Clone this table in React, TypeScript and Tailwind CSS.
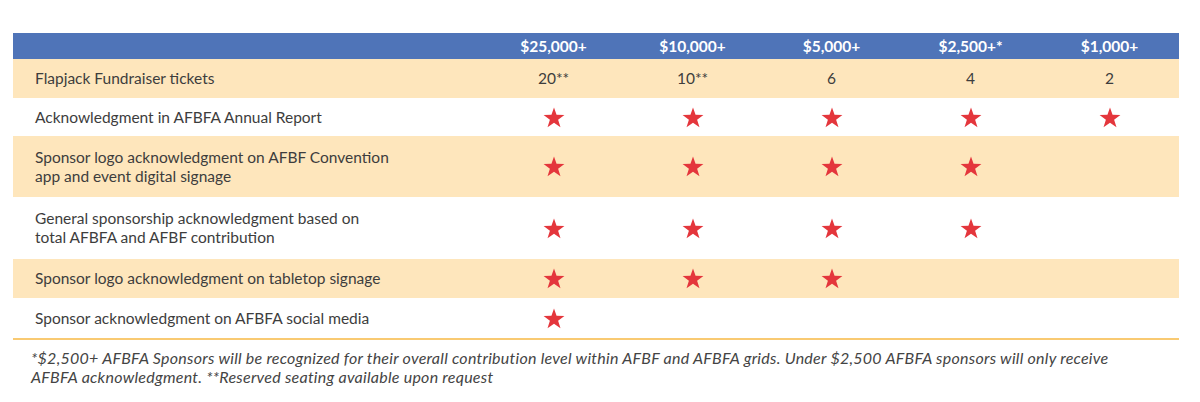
const tiers = ['$25,000+', '$10,000+', '$5,000+', '$2,500+*', '$1,000+'];

type Row = { label: string[]; cells: (string | boolean)[]; tan: boolean; h: string };

const rows: Row[] = [
  { label: ['Flapjack Fundraiser tickets'], cells: ['20**', '10**', '6', '4', '2'], tan: true, h: 'h-[39px]' },
  { label: ['Acknowledgment in AFBFA Annual Report'], cells: [true, true, true, true, true], tan: false, h: 'h-[38px]' },
  {
    label: ['Sponsor logo acknowledgment on AFBF Convention', 'app and event digital signage'],
    cells: [true, true, true, true, false],
    tan: true,
    h: 'h-[61px]',
  },
  {
    label: ['General sponsorship acknowledgment based on', 'total AFBFA and AFBF contribution'],
    cells: [true, true, true, true, false],
    tan: false,
    h: 'h-[62px]',
  },
  { label: ['Sponsor logo acknowledgment on tabletop signage'], cells: [true, true, true, false, false], tan: true, h: 'h-[39px]' },
  { label: ['Sponsor acknowledgment on AFBFA social media'], cells: [true, false, false, false, false], tan: false, h: 'h-[40px]' },
];

function Star() {
  return (
    <svg width="22" height="21" viewBox="0 0 24 23" className="block">
      <polygon
        points="12,0.5 14.8,8.6 23.4,8.7 16.5,13.9 19.1,22.2 12,17.2 4.9,22.2 7.5,13.9 0.6,8.7 9.2,8.6"
        fill="#e4363c"
      />
    </svg>
  );
}

export default function App() {
  return (
    <div className="w-[1200px] h-[402px] bg-white pt-[33px] pl-[13px] font-['Lato','Liberation_Sans',sans-serif] text-[#3d3d3d]">
      <div className="w-[1166px]">
        {/* header */}
        <div className="grid grid-cols-[471px_repeat(5,139px)] h-[26px] bg-[#4f74b8] items-center">
          <div />
          {tiers.map((t) => (
            <div key={t} className="text-center text-white font-bold text-[15.5px] leading-none pt-[1px]">
              {t}
            </div>
          ))}
        </div>

        {rows.map((r, i) => (
          <div
            key={i}
            className={`grid grid-cols-[471px_repeat(5,139px)] items-center ${r.h} ${r.tan ? 'bg-[#fee6bc]' : 'bg-white'}`}
          >
            <div className="pl-[22px] text-[15.5px] leading-[19px]">
              {r.label.map((l) => (
                <div key={l}>{l}</div>
              ))}
            </div>
            {r.cells.map((c, j) => (
              <div key={j} className="flex justify-center text-[15.5px]">
                {typeof c === 'string' ? c : c ? <Star /> : null}
              </div>
            ))}
          </div>
        ))}

        <div className="h-[2px] bg-[#f9ca72]" />
      </div>

      <p className="pl-[18px] pt-[8px] italic text-[16px] tracking-[0.25px] leading-[19px] text-[#444] whitespace-nowrap">
        *$2,500+ AFBFA Sponsors will be recognized for their overall contribution level within AFBF and AFBFA grids. Under $2,500 AFBFA sponsors will only receive
        <br />
        AFBFA acknowledgment. **Reserved seating available upon request
      </p>
    </div>
  );
}
